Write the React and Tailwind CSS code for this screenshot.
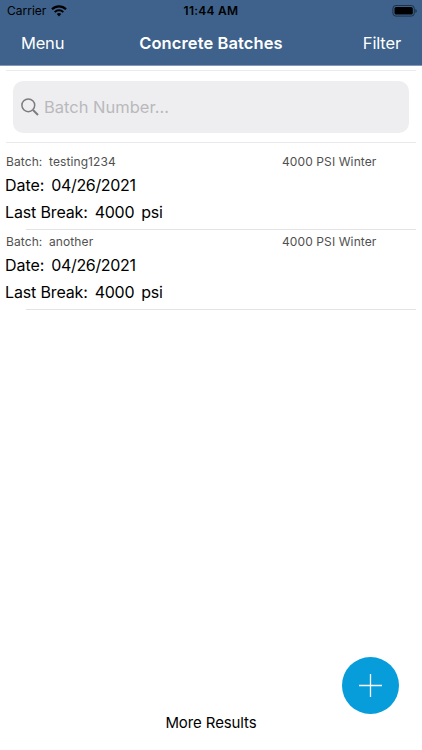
import { useState } from "react";

const lotes = [
  { id: 1, batch: "testing1234", mix: "4000 PSI Winter", date: "04/26/2021", lastBreak: 4000 },
  { id: 2, batch: "another", mix: "4000 PSI Winter", date: "04/26/2021", lastBreak: 4000 },
];

function StatusBar() {
  return (
    <div className="grid grid-cols-3 items-center h-[22px] pl-[7px] pr-1 text-black">
      <div className="flex items-center gap-[5px]">
        <span className="text-[12px] leading-4">Carrier</span>
        <svg width="16" height="12" viewBox="0 0 16 12" fill="none" stroke="currentColor">
          <path d="M1 4.3a10 10 0 0 1 14 0" strokeWidth="2.2" />
          <path d="M3.7 7.1a6.1 6.1 0 0 1 8.6 0" strokeWidth="2" />
          <path d="M8 11.4 5.8 9.1a3.2 3.2 0 0 1 4.4 0Z" fill="currentColor" stroke="none" />
        </svg>
      </div>
      <span className="text-center text-[12px] tracking-[0.25px] font-semibold leading-4 whitespace-nowrap pr-[3px]">11:44 AM</span>
      <svg className="justify-self-end" width="26" height="12" viewBox="0 0 26 12">
        <rect x="0.9" y="0.5" width="21.4" height="10.6" rx="3" fill="none" stroke="#1d3147" />
        <rect x="2.5" y="2" width="18.3" height="7.6" rx="1.6" fill="black" />
        <path d="M23.4 4v3.8a2 2 0 0 0 0-3.8Z" fill="#1d3147" />
      </svg>
    </div>
  );
}

function BatchRow({ item }) {
  return (
    <div className="h-[80px] text-black">
      <div className="flex items-center h-6 text-[12px] tracking-[0.1px] text-[#505050]">
        <span className="w-[43px] pl-[6px]">Batch:</span>
        <span className="pl-[6px] w-[239px]">{item.batch}</span>
        <span>{item.mix}</span>
      </div>
      <div className="flex gap-[7px] pl-[5px] h-6 leading-[22px] text-[16px]">
        <span className="tracking-[-0.05px]">Date:</span>
        <span className="tracking-[-0.35px]">{item.date}</span>
      </div>
      <div className="flex gap-[7px] pl-[5px] pt-[3px] h-[31px] leading-[22px] text-[16px] tracking-[-0.25px]">
        <span className="tracking-[-0.15px]">Last Break:</span>
        <span>{item.lastBreak}</span>
        <span>psi</span>
      </div>
      <div className="ml-[26px] mr-[6px] h-px bg-[#e3e3e4]" />
    </div>
  );
}

function App() {
  const [busca, setBusca] = useState("");

  const filtrados = lotes.filter(l => l.batch.includes(busca));

  return (
    <div className="relative flex flex-col h-screen bg-white font-['Inter',sans-serif] overflow-hidden">
      {/* Header */}
      <header className="h-[66px] bg-[#3e628b] border-b border-[#8398b8]">
        <StatusBar />
        <div className="grid grid-cols-[1fr_auto_1fr] items-center h-[43px] px-[21px] text-white text-[16.5px]">
          <button className="text-left tracking-[-0.2px]">Menu</button>
          <h1 className="font-semibold tracking-[0.1px]">Concrete Batches</h1>
          <button className="text-right tracking-[-0.15px]">Filter</button>
        </div>
      </header>

      {/* Search */}
      <div className="mt-1 mx-[6px] h-[73px] pt-[10px] px-[7px] border-y border-[#e8eaec]">
        <label className="flex items-center h-[52px] pl-[8px] rounded-[10px] bg-[#eeeef0]">
          <svg className="-mt-px" width="18" height="18" viewBox="0 0 18 18" fill="none" stroke="#7c7c80" strokeWidth="1.5">
            <circle cx="7.3" cy="7.3" r="6.4" />
            <path d="m12 12 5 5" strokeWidth="1.9" />
          </svg>
          <input
            value={busca}
            onChange={(e) => setBusca(e.target.value)}
            placeholder="Batch Number..."
            className="flex-1 ml-[5px] bg-transparent outline-none text-[16.5px] placeholder:text-[#b9b9bc]"
          />
        </label>
      </div>

      {/* List */}
      <div className="pt-[7px]">
        {filtrados.map(item => (
          <BatchRow key={item.id} item={item} />
        ))}
      </div>

      <button className="mt-auto mb-[15px] h-6 text-[15px] tracking-[-0.1px] leading-6 text-black">More Results</button>

      <button className="absolute right-[23px] bottom-[36px] flex items-center justify-center size-[57px] rounded-full bg-[#069dda]">
        <svg width="23" height="23" viewBox="0 0 23 23" stroke="white" strokeWidth="1.3">
          <path d="M11.5 0v23M0 11.5h23" />
        </svg>
      </button>
    </div>
  );
}

export default App;
